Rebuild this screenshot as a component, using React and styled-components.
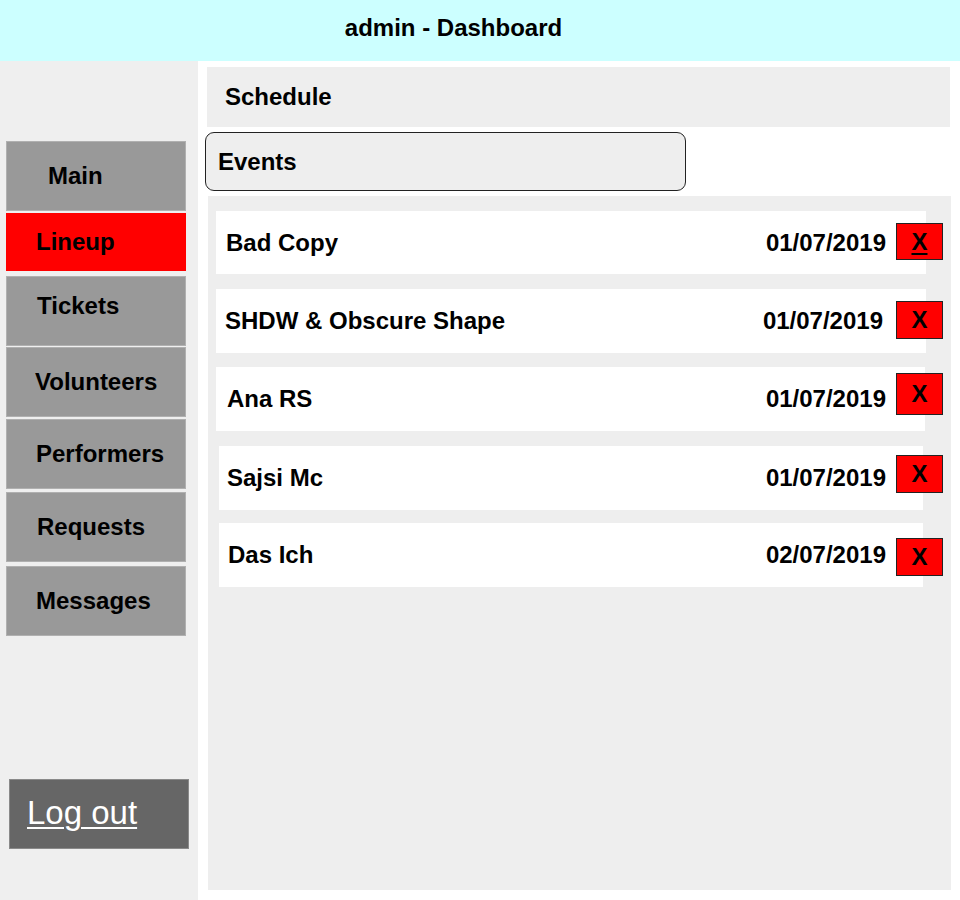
import React from 'react';
import styled, { createGlobalStyle } from 'styled-components';

const GlobalStyle = createGlobalStyle`
    * { box-sizing: border-box; }
    body {
        margin: 0;
        font-family: "Liberation Sans", Arial, sans-serif;
        background: #fff;
    }
`;

const Page = styled.div`
    display: grid;
    grid-template-columns: 198px 1fr;
    grid-template-rows: 61px 839px;
    width: 960px;
    height: 900px;
`;

const Header = styled.header`
    grid-column: 1 / 3;
    display: flex;
    align-items: center;
    justify-content: center;
    padding: 0 54px 6px 0;
    background: #ccffff;
    font-size: 24px;
    font-weight: bold;
    color: #000;
`;

const Sidebar = styled.nav`
    display: flex;
    flex-direction: column;
    align-items: flex-start;
    padding: 80px 0 0 6px;
    background: #efefef;
`;

const NavItem = styled.a`
    display: flex;
    align-items: center;
    width: 180px;
    height: ${({ h }) => h}px;
    margin-top: ${({ mt }) => mt}px;
    padding: 0 0 ${({ lift }) => lift || 0}px ${({ pl }) => pl}px;
    background: ${({ active }) => active ? '#ff0000' : '#999999'};
    border: 1px solid ${({ active }) => active ? '#ff0000' : '#b0b0b0'};
    color: #000;
    font-size: 24px;
    font-weight: bold;
    text-decoration: none;
    cursor: pointer;
`;

const LogOut = styled.a`
    display: flex;
    align-items: center;
    width: 180px;
    height: 70px;
    margin: 143px 0 0 3px;
    padding: 0 0 2px 17px;
    background: #666666;
    border: 1px solid #8a8a8a;
    color: #fff;
    font-size: 33px;
    text-decoration: underline;
    text-decoration-thickness: 2px;
    text-underline-offset: 3px;
    cursor: pointer;
`;

const Content = styled.main`
    display: flex;
    flex-direction: column;
    align-items: flex-start;
    padding: 6px 10px 0 9px;
`;

const Schedule = styled.div`
    display: flex;
    align-items: center;
    width: 743px;
    height: 60px;
    padding-left: 18px;
    background: #eeeeee;
    font-size: 24px;
    font-weight: bold;
`;

const Tab = styled.div`
    display: flex;
    align-items: center;
    width: 481px;
    height: 59px;
    margin: 5px 0 0 -2px;
    padding: 0 0 0 12px;
    background: #eeeeee;
    border: 1px solid #222;
    border-radius: 9px;
    font-size: 24px;
    font-weight: bold;
`;

const List = styled.section`
    display: flex;
    flex-direction: column;
    width: 743px;
    height: 694px;
    margin: 5px 0 0 1px;
    padding-top: 15px;
    background: #eeeeee;
`;

const Row = styled.div`
    display: flex;
    align-items: flex-start;
    margin-top: ${({ mt }) => mt}px;
    margin-left: ${({ ml }) => ml}px;
`;

const Card = styled.div`
    display: flex;
    align-items: center;
    width: ${({ w }) => w}px;
    height: ${({ h }) => h}px;
    padding: 0 ${({ pr }) => pr}px 0 ${({ pl }) => pl}px;
    background: #fff;
    font-size: 24px;
    font-weight: bold;
`;

const Name = styled.span`
    flex: 1;
`;

const DateText = styled.span``;

const DeleteButton = styled.button`
    width: 47px;
    height: ${({ h }) => h}px;
    margin: ${({ mt }) => mt}px 0 0 -${({ overlap }) => overlap}px;
    padding: 0;
    background: #ff0000;
    border: 1px solid #222;
    font-family: inherit;
    font-size: 24px;
    font-weight: bold;
    color: #000;
    text-decoration: ${({ underline }) => underline ? 'underline' : 'none'};
    text-underline-offset: 3px;
    cursor: pointer;
`;

const navItems = [
    { label: 'Main', h: 70, mt: 0, pl: 41 },
    { label: 'Lineup', h: 58, mt: 2, pl: 29, active: true },
    { label: 'Tickets', h: 70, mt: 5, pl: 30, lift: 10 },
    { label: 'Volunteers', h: 70, mt: 1, pl: 28 },
    { label: 'Performers', h: 70, mt: 2, pl: 29 },
    { label: 'Requests', h: 70, mt: 3, pl: 30 },
    { label: 'Messages', h: 70, mt: 4, pl: 29 },
];

const events = [
    { name: 'Bad Copy', date: '01/07/2019', mt: 0, ml: 8, w: 710, h: 63, pl: 10, pr: 40, btnTop: 12, btnH: 37, overlap: 30, underline: true },
    { name: 'SHDW & Obscure Shape', date: '01/07/2019', mt: 15, ml: 8, w: 710, h: 64, pl: 9, pr: 43, btnTop: 12, btnH: 38, overlap: 30 },
    { name: 'Ana RS', date: '01/07/2019', mt: 14, ml: 8, w: 709, h: 64, pl: 11, pr: 39, btnTop: 6, btnH: 42, overlap: 29 },
    { name: 'Sajsi Mc', date: '01/07/2019', mt: 15, ml: 11, w: 704, h: 64, pl: 8, pr: 37, btnTop: 9, btnH: 38, overlap: 27 },
    { name: 'Das Ich', date: '02/07/2019', mt: 13, ml: 11, w: 704, h: 64, pl: 9, pr: 37, btnTop: 15, btnH: 38, overlap: 27 },
];

const App = () => {
    return (
        <>
            <GlobalStyle />
            <Page>
                <Header>admin - Dashboard</Header>
                <Sidebar>
                    {navItems.map((item) => (
                        <NavItem
                            key={item.label}
                            h={item.h}
                            mt={item.mt}
                            pl={item.pl}
                            lift={item.lift}
                            active={item.active}>
                            {item.label}
                        </NavItem>
                    ))}
                    <LogOut>Log out</LogOut>
                </Sidebar>
                <Content>
                    <Schedule>Schedule</Schedule>
                    <Tab>Events</Tab>
                    <List>
                        {events.map((ev) => (
                            <Row key={ev.name} mt={ev.mt} ml={ev.ml}>
                                <Card w={ev.w} h={ev.h} pl={ev.pl} pr={ev.pr}>
                                    <Name>{ev.name}</Name>
                                    <DateText>{ev.date}</DateText>
                                </Card>
                                <DeleteButton
                                    h={ev.btnH}
                                    mt={ev.btnTop}
                                    overlap={ev.overlap}
                                    underline={ev.underline}>
                                    X
                                </DeleteButton>
                            </Row>
                        ))}
                    </List>
                </Content>
            </Page>
        </>
    );
}

export default App;
